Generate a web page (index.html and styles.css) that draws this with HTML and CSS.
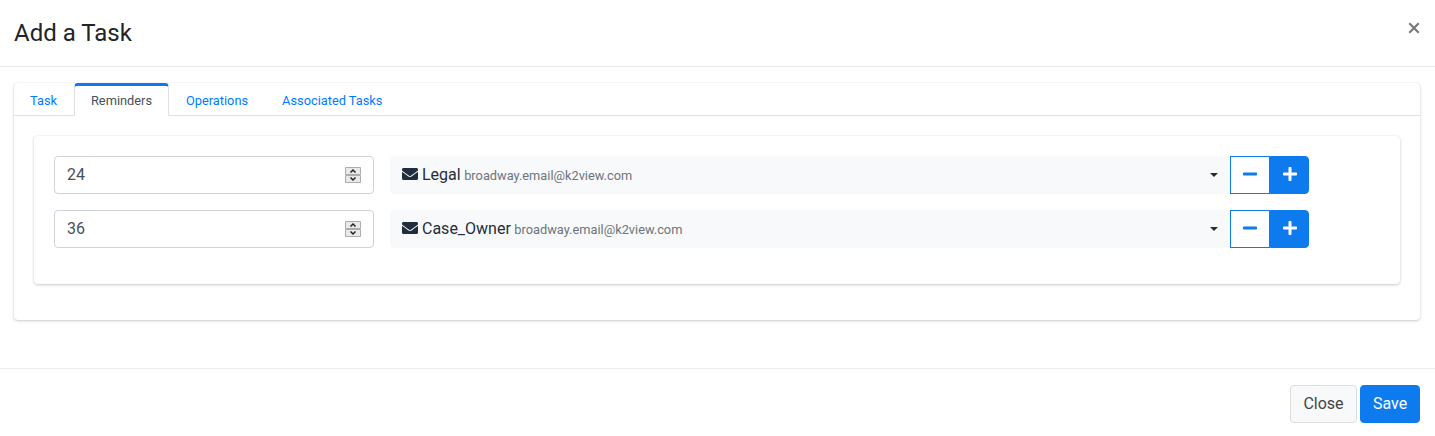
FILE: index.html
```html
<!DOCTYPE html>
<html lang="en">
<head>
<meta charset="utf-8">
<title>Add a Task</title>
<link rel="stylesheet" href="styles.css">
</head>
<body>
<svg class="defs" aria-hidden="true">
  <symbol id="envelope" viewBox="0 0 512 512"><path d="M502.3 190.8c3.900-3.100 9.700-.2 9.700 4.700V400c0 26.500-21.500 48-48 48H48c-26.500 0-48-21.500-48-48V195.600c0-5 5.700-7.800 9.700-4.700 22.400 17.400 52.100 39.500 154.100 113.600 21.100 15.400 56.700 47.800 92.200 47.600 35.700.3 72-32.800 92.300-47.600 102-74.100 131.600-96.300 154-113.700zM256 320c23.200.4 56.600-29.200 73.400-41.400 132.700-96.300 142.800-104.700 173.400-128.700 5.800-4.500 9.200-11.500 9.200-18.900v-19c0-26.500-21.500-48-48-48H48c-26.500 0-48 21.500-48 48v19c0 7.400 3.400 14.300 9.200 18.900 30.600 23.900 40.700 32.400 173.400 128.700 16.800 12.200 50.200 41.800 73.400 41.400z"/></symbol>
  <symbol id="minus" viewBox="0 0 448 512"><path d="M416 208H32c-17.670 0-32 14.330-32 32v32c0 17.670 14.330 32 32 32h384c17.670 0 32-14.330 32-32v-32c0-17.670-14.330-32-32-32z"/></symbol>
  <symbol id="plus" viewBox="0 0 448 512"><path d="M416 208H272V64c0-17.670-14.330-32-32-32h-32c-17.670 0-32 14.330-32 32v144H32c-17.670 0-32 14.330-32 32v32c0 17.670 14.330 32 32 32h144v144c0 17.670 14.330 32 32 32h32c17.670 0 32-14.330 32-32V304h144c17.670 0 32-14.330 32-32v-32c0-17.670-14.330-32-32-32z"/></symbol>
  <symbol id="spin" viewBox="0 0 16 16"><path class="spin-box" d="M.5.5h15v7H.5zM.5 8.500h15v7H.5z"/><path class="spin-arrow" d="M5.500 5.500L8 3l2.500 2.500M5.500 10.500L8 13l2.500-2.500"/></symbol>
</svg>
<header class="modal-header">
  <h4 class="title">Add a Task</h4>
  <button class="close" aria-label="Close dialog"><svg class="cross" viewBox="0 0 12 12"><path d="M1.300 1.300l9.400 9.400M10.700 1.300L1.300 10.700"/></svg></button>
</header>
<main class="modal-body">
  <section class="card tabs-card">
    <nav class="tabs">
      <a class="tab">Task</a>
      <a class="tab active">Reminders</a>
      <a class="tab">Operations</a>
      <a class="tab">Associated Tasks</a>
    </nav>
    <div class="card reminders">
      <div class="reminder">
        <div class="number"><span>24</span><svg class="spinner"><use href="#spin"/></svg></div>
        <div class="select"><svg class="mail"><use href="#envelope"/></svg><span class="name">Legal</span><small>broadway.email@k2view.com</small><i class="caret"></i></div>
        <button class="btn-remove" aria-label="Remove"><svg class="sign"><use href="#minus"/></svg></button>
        <button class="btn-add" aria-label="Add"><svg class="sign"><use href="#plus"/></svg></button>
      </div>
      <div class="reminder">
        <div class="number"><span>36</span><svg class="spinner"><use href="#spin"/></svg></div>
        <div class="select"><svg class="mail"><use href="#envelope"/></svg><span class="name">Case_Owner</span><small>broadway.email@k2view.com</small><i class="caret"></i></div>
        <button class="btn-remove" aria-label="Remove"><svg class="sign"><use href="#minus"/></svg></button>
        <button class="btn-add" aria-label="Add"><svg class="sign"><use href="#plus"/></svg></button>
      </div>
    </div>
  </section>
</main>
<footer class="modal-footer">
  <button class="btn btn-light">Close</button>
  <button class="btn btn-primary">Save</button>
</footer>
</body>
</html>
```
FILE: styles.css
```css
* { box-sizing: border-box; }
body {
  margin: 0;
  height: 436px;
  overflow: hidden;
  display: flex;
  flex-direction: column;
  background: #fff;
  color: #212529;
  font: 400 16px/24px Roboto, sans-serif;
}
button { font: inherit; margin: 0; padding: 0; cursor: pointer; }
.defs { display: none; }

.modal-header {
  height: 67px;
  padding: 0 15.5px 0 14px;
  display: flex;
  justify-content: space-between;
  align-items: center;
  border-bottom: 1px solid #e9ecef;
}
.title { margin: 0; font-size: 24px; font-weight: 400; line-height: 36px; }
.close {
  display: flex;
  margin: 0 0 11px;
  border: 0;
  background: none;
}
.cross { width: 12px; height: 12px; fill: none; stroke: #7a7a7a; stroke-width: 2.300; }

.modal-body { height: 301px; padding: 16px 15px 0 14px; }
.card {
  background: #fff;
  border-radius: 4px;
  box-shadow: 0 0 1px rgba(0, 0, 0, .125), 0 1px 3px rgba(0, 0, 0, .2);
}
.tabs-card { height: 237px; }
.tabs {
  height: 33px;
  display: flex;
  border-bottom: 1px solid #dee2e6;
  font-size: 12.8px;
}
.tab {
  height: 33px;
  padding: 3px 16px 0;
  border: 1px solid transparent;
  border-width: 0 1px;
  color: #007bff;
  line-height: 30px;
}
.tab:first-child { padding-left: 15px; }
.active {
  width: 95px;
  padding: 0 0 0 16px;
  background: #fff;
  border-color: #dee2e6;
  border-top: 3px solid #0d7bee;
  border-radius: 4px 4px 0 0;
  color: #495057;
}

.reminders {
  height: 148px;
  margin: 20px 20px 0;
  padding: 20px;
  display: flex;
  flex-direction: column;
  gap: 16px;
}
.reminder { display: flex; height: 38px; }
.number {
  width: 320px;
  margin-right: 16px;
  padding: 0 12px;
  display: flex;
  align-items: center;
  justify-content: space-between;
  border: 1px solid #ced4da;
  border-radius: 4px;
  color: #495057;
}
.spinner { width: 16px; height: 16px; }
.spin-box { fill: #e9e9e9; stroke: #adadad; }
.spin-arrow { fill: none; stroke: #222; stroke-width: 1.5; }
.select {
  width: 840px;
  padding: 0 12px;
  display: flex;
  align-items: center;
  background: #f8f9fa;
  border-radius: 4px 0 0 4px;
}
.mail { width: 16px; height: 16px; margin: 0 4px 2px 0; fill: #1f2d3d; }
.name { color: #1f2d3d; margin-right: 3.500px; }
small { color: #6c757d; font-size: 12.8px; padding-top: 1px; }
.caret {
  margin-left: auto;
  border: 4.800px solid transparent;
  border-top-color: #1f2d3d;
  border-bottom: 0;
}
.btn-remove, .btn-add {
  width: 40px;
  display: flex;
  align-items: center;
  justify-content: center;
  border: 1px solid #0d7bee;
  background: #fff;
  fill: #0d7bee;
}
.btn-add {
  width: 39px;
  background: #0d7bee;
  fill: #fff;
  border-radius: 0 4px 4px 0;
}
.sign { width: 14px; height: 16px; margin-bottom: 2px; }

.modal-footer {
  height: 68px;
  padding: 16px 15px 0;
  display: flex;
  justify-content: flex-end;
  gap: 3px;
  border-top: 1px solid #e9ecef;
}
.btn { height: 38px; border: 1px solid #0d7bee; border-radius: 4px; }
.btn-light { width: 67px; background: #f8f9fa; border-color: #ddd; color: #444; }
.btn-primary { width: 60px; background: #0d7bee; color: #fff; }
```
